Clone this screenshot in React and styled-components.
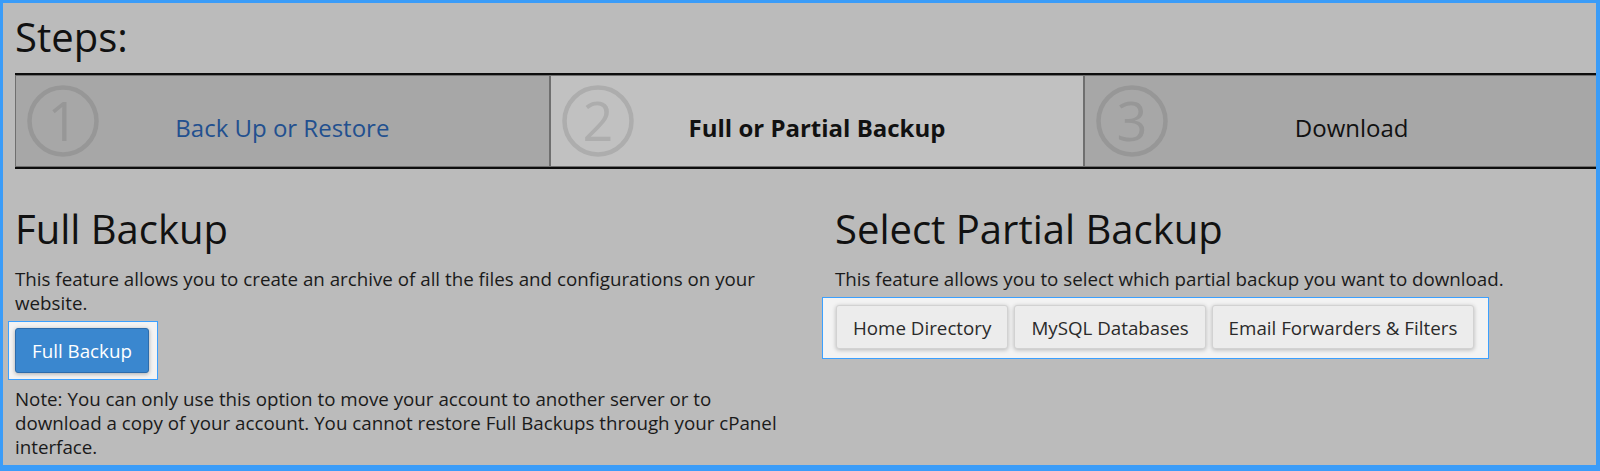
import React from "react";
import styled, { createGlobalStyle } from "styled-components";

const GlobalStyle = createGlobalStyle`
  body {
    margin: 0;
    background: #bbbbbb;
    font-family: "Open Sans", "Liberation Sans", sans-serif;
  }
`;

const steps = [
  { n: 1, label: "Back Up or Restore", kind: "link" },
  { n: 2, label: "Full or Partial Backup", kind: "active" },
  { n: 3, label: "Download", kind: "plain" },
];

function App() {
  return (
    <>
      <GlobalStyle />
      <Frame>
        <Content>
          <Title>Steps:</Title>
          <StepBar>
            {steps.map((s) => (
              <Step key={s.n} $active={s.kind === "active"}>
                <StepNumber n={s.n} active={s.kind === "active"} />
                <StepLabel $kind={s.kind}>{s.label}</StepLabel>
              </Step>
            ))}
          </StepBar>

          <Columns>
            <Column>
              <Heading>Full Backup</Heading>
              <Text>
                This feature allows you to create an archive of all the files
                and configurations on your website.
              </Text>
              <Highlight $pad="6px 8px 6px 6px" $shift="-7px">
                <PrimaryButton>Full Backup</PrimaryButton>
              </Highlight>
              <Text $top="7px">
                Note: You can only use this option to move your account to
                another server or to download a copy of your account. You cannot
                restore Full Backups through your cPanel interface.
              </Text>
            </Column>

            <Column>
              <Heading>Select Partial Backup</Heading>
              <Text>
                This feature allows you to select which partial backup you want
                to download.
              </Text>
              <Highlight $pad="7px 14px 9px 13px" $shift="-13px">
                <ButtonRow>
                  <Button>Home Directory</Button>
                  <Button>MySQL Databases</Button>
                  <Button>Email Forwarders &amp; Filters</Button>
                </ButtonRow>
              </Highlight>
            </Column>
          </Columns>
        </Content>
      </Frame>
    </>
  );
}

function StepNumber({ n, active }) {
  const color = active ? "#adadad" : "#979797";
  return (
    <NumberBadge width="72" height="72" viewBox="0 0 72 72">
      <circle cx="36" cy="36" r="33.5" fill="none" stroke={color} strokeWidth="4.5" />
      <text
        x="36"
        y="56"
        textAnchor="middle"
        fontFamily="'Open Sans', sans-serif"
        fontSize="54"
        fill={color}
      >
        {n}
      </text>
    </NumberBadge>
  );
}

const Frame = styled.div`
  box-sizing: border-box;
  width: 1600px;
  height: 471px;
  overflow: hidden;
  border: 3px solid #3a9cf8;
  border-right-width: 4px;
  border-bottom-width: 6px;
  background: #bbbbbb;
  padding: 10px 0 0 12px;
`;

const Content = styled.div`
  width: 1604px;
  color: #151515;
`;

const Title = styled.h1`
  margin: 0;
  font-size: 40px;
  font-weight: 400;
  line-height: 48px;
  color: #111;
`;

const StepBar = styled.div`
  display: flex;
  margin-top: 12px;
  border-top: 2px solid #0d0d0d;
  border-bottom: 2px solid #0d0d0d;
`;

const Step = styled.div`
  flex: 1;
  box-sizing: border-box;
  height: 92px;
  display: grid;
  align-items: center;
  border: 1px solid #6f6f6f;
  background: ${(p) => (p.$active ? "#c1c1c1" : "#a7a7a7")};
`;

const NumberBadge = styled.svg`
  grid-area: 1 / 1;
  justify-self: start;
  margin-left: 11px;
  overflow: visible;
`;

const StepLabel = styled.span`
  grid-area: 1 / 1;
  justify-self: center;
  padding-top: 12px;
  font-size: 24px;
  font-weight: ${(p) => (p.$kind === "active" ? 700 : 400)};
  color: ${(p) => (p.$kind === "link" ? "#22508f" : "#111")};
`;

const Columns = styled.div`
  display: grid;
  grid-template-columns: 770px 1fr;
  column-gap: 50px;
  margin-top: 36px;
`;

const Column = styled.div`
  display: flex;
  flex-direction: column;
  align-items: flex-start;
`;

const Heading = styled.h2`
  margin: 0;
  font-size: 40px;
  font-weight: 400;
  line-height: 48px;
  color: #111;
`;

const Text = styled.p`
  margin: ${(p) => p.$top || "14px"} 0 0;
  font-size: 18.75px;
  line-height: 24px;
  color: #1a1a1a;
`;

const Highlight = styled.div`
  margin-top: 6px;
  margin-left: ${(p) => p.$shift};
  padding: ${(p) => p.$pad};
  border: 1px solid #3ba0ff;
  background: #f3f3f3;
`;

const ButtonRow = styled.div`
  display: flex;
  gap: 6px;
`;

const PrimaryButton = styled.button`
  height: 45px;
  padding: 0 16px;
  border: 1px solid #2d6cab;
  border-radius: 3px;
  background: #3a87cf;
  color: #fff;
  font-family: "Open Sans", "Liberation Sans", sans-serif;
  font-size: 18.75px;
  box-shadow: 0 1px 4px rgba(0, 0, 0, 0.3);
`;

const Button = styled.button`
  height: 44px;
  padding: 0 16px;
  border: 1px solid #d2d2d2;
  border-radius: 3px;
  background: #ececec;
  color: #2a2a2a;
  font-family: "Open Sans", "Liberation Sans", sans-serif;
  font-size: 18.75px;
  box-shadow: 0 1px 4px rgba(0, 0, 0, 0.25);
`;

export default App;
